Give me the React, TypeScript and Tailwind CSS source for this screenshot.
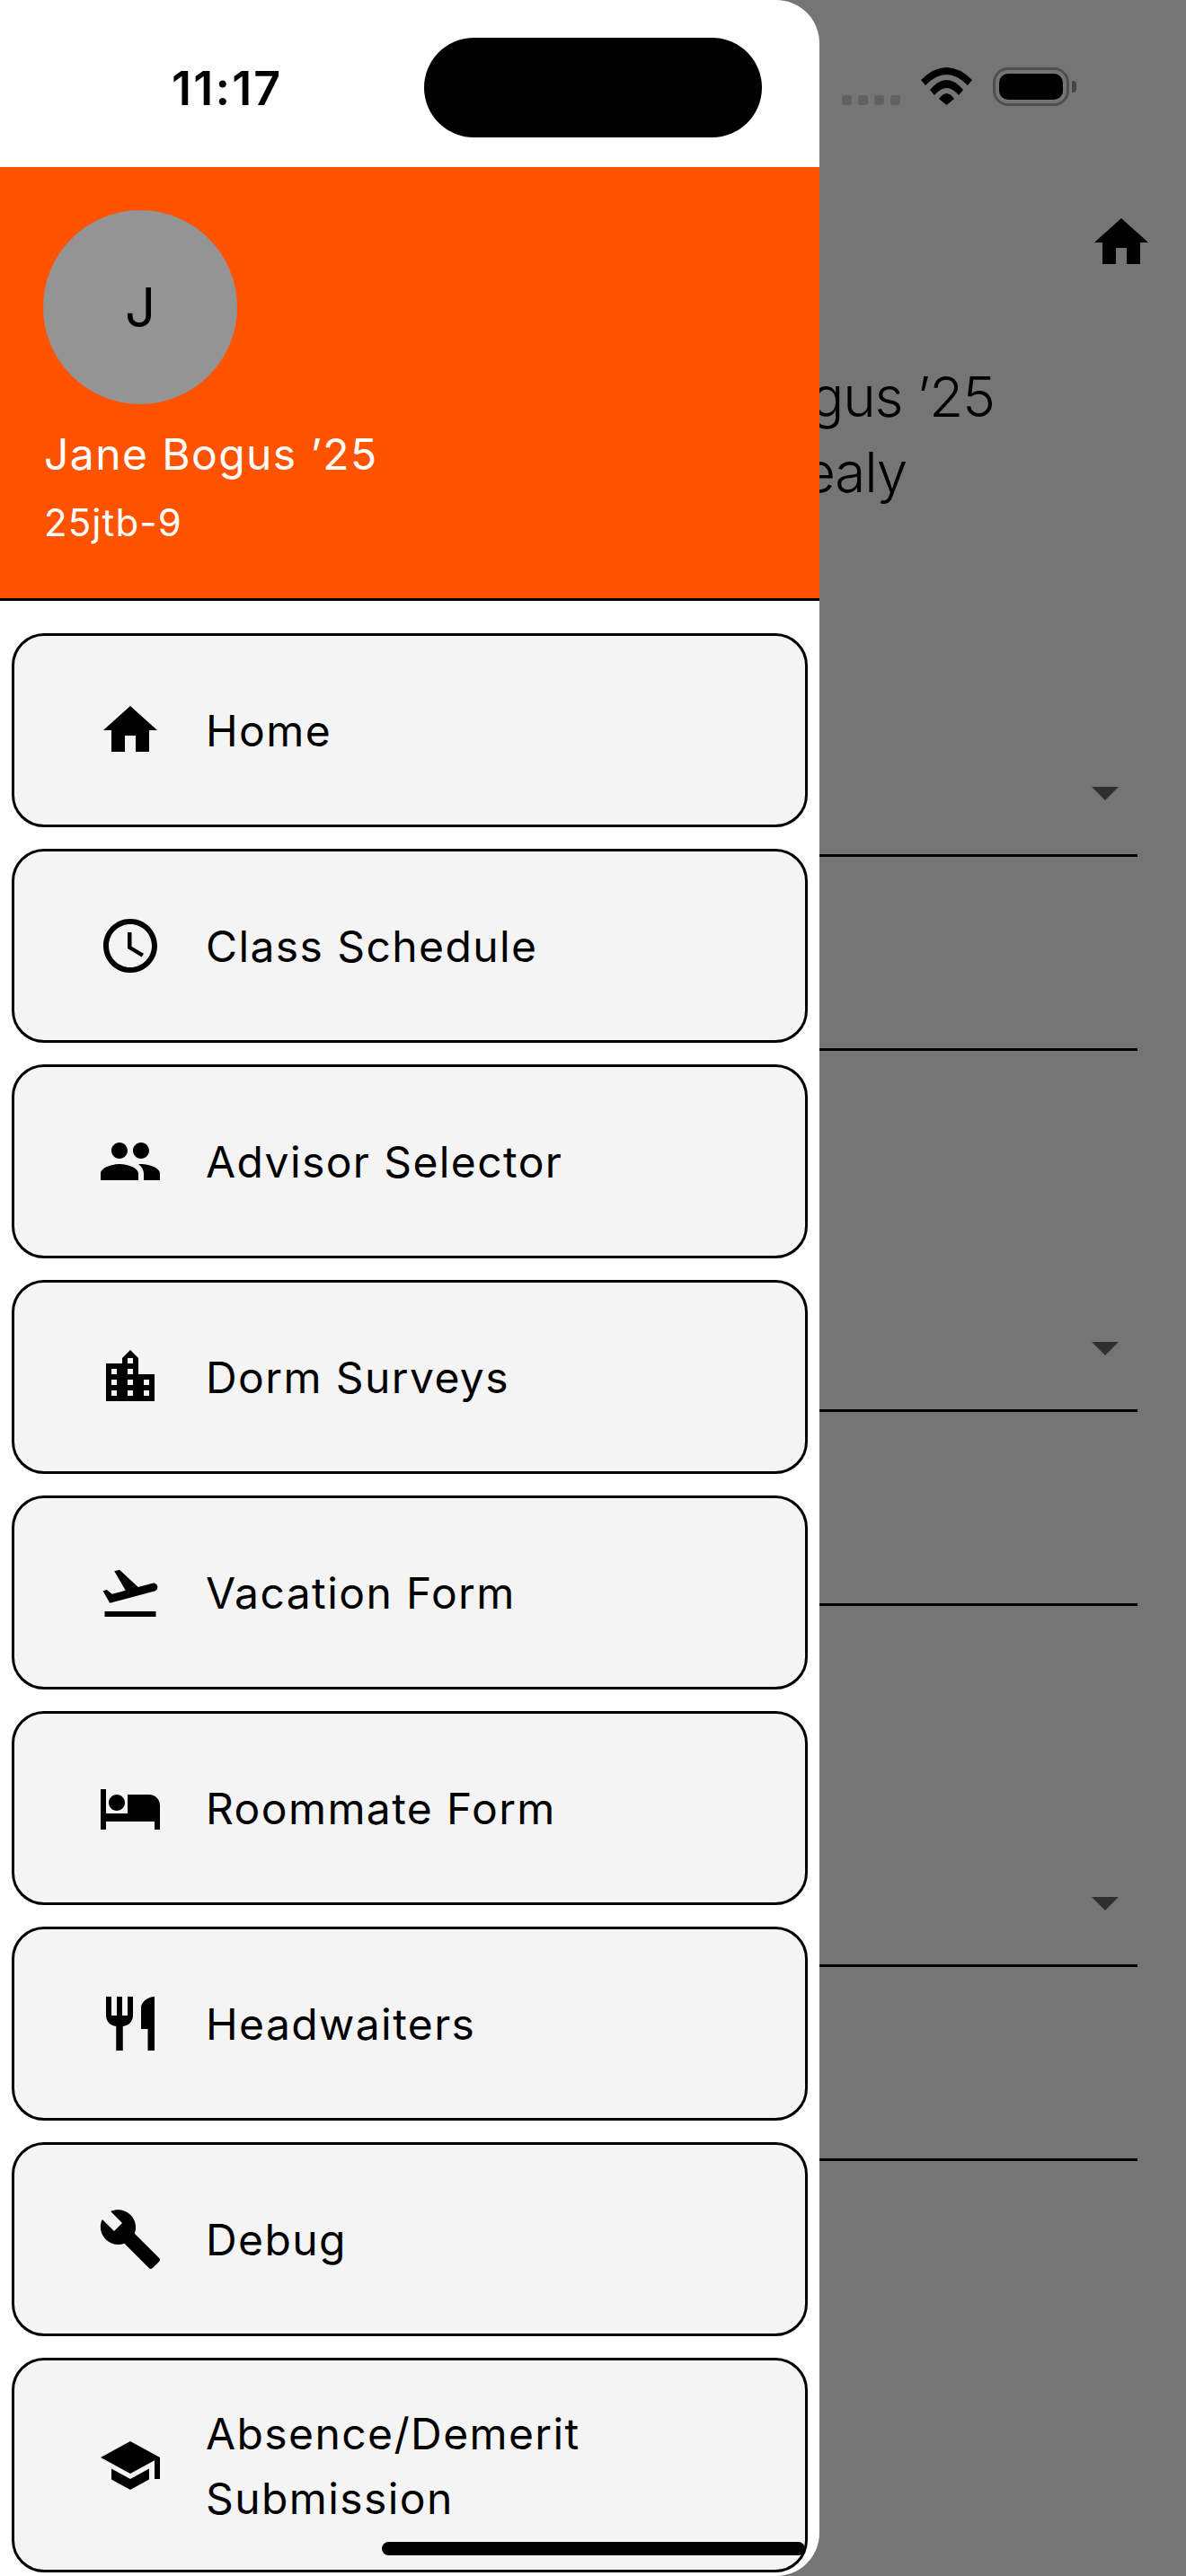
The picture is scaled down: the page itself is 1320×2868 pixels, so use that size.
const NAV_ITEMS: { label: string; icon: string }[] = [
  { label: "Home", icon: "M10 20v-6h4v6h5v-8h3L12 3 2 12h3v8z" },
  { label: "Class Schedule", icon: "M11.99 2C6.47 2 2 6.48 2 12s4.47 10 9.99 10C17.52 22 22 17.52 22 12S17.52 2 11.99 2zM12 20c-4.42 0-8-3.58-8-8s3.58-8 8-8 8 3.58 8 8-3.58 8-8 8zm.5-13H11v6l5.25 3.15.75-1.23-4.5-2.67z" },
  { label: "Advisor Selector", icon: "M16 11c1.66 0 2.99-1.34 2.99-3S17.66 5 16 5c-1.66 0-3 1.34-3 3s1.34 3 3 3zm-8 0c1.66 0 2.99-1.34 2.99-3S9.66 5 8 5C6.34 5 5 6.34 5 8s1.34 3 3 3zm0 2c-2.33 0-7 1.17-7 3.5V19h14v-2.5c0-2.33-4.67-3.5-7-3.5zm8 0c-.29 0-.62.02-.97.05 1.16.84 1.97 1.97 1.97 3.45V19h6v-2.5c0-2.33-4.67-3.5-7-3.5z" },
  { label: "Dorm Surveys", icon: "M15 11V5l-3-3-3 3v2H3v14h18V11h-6zm-8 8H5v-2h2v2zm0-4H5v-2h2v2zm0-4H5V9h2v2zm6 8h-2v-2h2v2zm0-4h-2v-2h2v2zm0-4h-2V9h2v2zm0-4h-2V5h2v2zm6 12h-2v-2h2v2zm0-4h-2v-2h2v2z" },
  { label: "Vacation Form", icon: "M2.5 19h19v2h-19zm19.57-9.36c-.21-.8-1.04-1.28-1.84-1.06L14.92 10l-6.9-6.43-1.93.51 4.14 7.17-4.97 1.33-1.97-1.54-1.45.39 1.82 3.16.77 1.33 1.6-.43 5.31-1.42 4.35-1.16L21 11.49c.81-.23 1.28-1.05 1.07-1.85z" },
  { label: "Roommate Form", icon: "M7 13c1.66 0 3-1.34 3-3S8.66 7 7 7s-3 1.34-3 3 1.34 3 3 3zm12-6h-8v7H3V5H1v15h2v-3h18v3h2v-9c0-2.21-1.79-4-4-4z" },
  { label: "Headwaiters", icon: "M11 9H9V2H7v7H5V2H3v7c0 2.12 1.66 3.84 3.75 3.97V22h2.5v-9.03C11.34 12.84 13 11.12 13 9V2h-2v7zm5-3v8h2.5v8H21V2c-2.76 0-5 2.24-5 4z" },
  { label: "Debug", icon: "M22.7 19l-9.1-9.1c.9-2.3.4-5-1.5-6.9-2-2-5-2.4-7.4-1.3L9 6 6 9 1.6 4.7C.4 7.1.9 10.1 2.9 12.1c1.9 1.9 4.6 2.4 6.9 1.5l9.1 9.1c.4.4 1 .4 1.4 0l2.3-2.3c.5-.4.5-1.1.1-1.4z" },
  { label: "Absence/Demerit Submission", icon: "M5 13.18v4L12 21l7-3.82v-4L12 17l-7-3.82zM12 3 1 9l11 6 9-4.91V17h2V9L12 3z" },
];

const HOME_ICON = NAV_ITEMS[0].icon;

function Icon({ d, className }: { d: string; className: string }) {
  return (
    <svg viewBox="0 0 24 24" className={className} fill="currentColor">
      <path d={d} />
    </svg>
  );
}

function NavCard({ label, icon, tall }: { label: string; icon: string; tall?: boolean }) {
  return (
    <div
      className={`flex items-center rounded-[36px] border-[3px] border-black bg-[#f4f4f4] pl-[93px] pr-[120px] ${
        tall ? "h-[239px]" : "h-[216px]"
      }`}
    >
      <Icon d={icon} className="h-[72px] w-[72px] shrink-0 text-black" />
      <span className="ml-[48px] pt-[2px] text-[48px] font-[380] leading-[72px] tracking-[1.4px] text-black">{label}</span>
    </div>
  );
}

function Field({ arrow }: { arrow?: boolean }) {
  return (
    <div className="relative mr-[54px] h-[216px] border-b-[3px] border-black">
      {arrow ? (
        <div className="absolute right-[21px] top-[138px] h-0 w-0 border-x-[15px] border-t-[15px] border-x-transparent border-t-[#2f2f2f]" />
      ) : null}
    </div>
  );
}

function StatusIcons() {
  return (
    <div className="flex h-[186px] shrink-0 items-start pl-[25px] pt-[75px]">
      <div className="mt-[31px] flex gap-[7px]">
        <span className="h-[11px] w-[11px] rounded-[3px] bg-[#616161]" />
        <span className="h-[11px] w-[11px] rounded-[3px] bg-[#616161]" />
        <span className="h-[11px] w-[11px] rounded-[3px] bg-[#616161]" />
        <span className="h-[11px] w-[11px] rounded-[3px] bg-[#616161]" />
      </div>
      <svg viewBox="0 0 57 42" className="ml-[23px] h-[42px] w-[57px]" fill="black">
        <path d="M0 14Q28.5 -14 57 14L52 20Q28.5 -4 5 20Z" />
        <path d="M10 25Q28.5 3 47 25L42 31Q28.5 15 15 31Z" />
        <path d="M20 35Q28.5 23 37 35L28.5 42Z" />
      </svg>
      <div className="ml-[23px] h-[43px] w-[85px] rounded-[17px] border-[3px] border-[#4f4f4f] p-[4px]">
        <div className="h-full w-full rounded-[10px] bg-black" />
      </div>
      <div className="ml-[3px] mt-[15px] h-[13px] w-[5px] rounded-r-[4px] bg-[#454545]" />
    </div>
  );
}

export default function App() {
  return (
    <div className="flex h-[2868px] w-[1320px] overflow-hidden bg-[#757575] font-['Inter','Liberation_Sans',sans-serif]">
      <aside className="flex h-full w-[912px] shrink-0 flex-col overflow-hidden rounded-r-[48px] bg-white">
        <div className="flex h-[186px] shrink-0 items-center pl-[191px] pt-[8px]">
          <span className="mt-[3px] w-[121px] text-[52px] font-semibold leading-none tracking-[2.2px] text-black">11:17</span>
          <div className="ml-[160px] h-[111px] w-[376px] rounded-full bg-black" />
        </div>
        <div className="h-[483px] shrink-0 border-b-[3px] border-black bg-[#ff5300] pl-[48px] pt-[48px] text-white">
          <div className="flex h-[216px] w-[216px] items-center justify-center rounded-full bg-[#949494] text-[60px] font-[380] text-black">
            J
          </div>
          <p className="ml-[1px] mt-[26px] text-[48px] font-[380] leading-[60px] tracking-[1.4px]">Jane Bogus ’25</p>
          <p className="ml-[1px] mt-[21px] text-[42px] font-[380] leading-[50px] tracking-[1.1px]">25jtb-9</p>
        </div>
        <nav className="relative flex flex-col gap-[24px] px-[13px] pt-[36px]">
          {NAV_ITEMS.map((item, i) => (
            <NavCard key={item.label} label={item.label} icon={item.icon} tall={i === NAV_ITEMS.length - 1} />
          ))}
          <div className="absolute left-[425px] top-[2161px] h-[15px] w-[471px] rounded-full bg-black" />
        </nav>
      </aside>
      <main className="flex min-w-0 flex-1 flex-col overflow-hidden">
        <StatusIcons />
        <div className="flex h-[120px] shrink-0 justify-end pr-[36px] pt-[48px]">
          <Icon d={HOME_ICON} className="h-[72px] w-[72px] text-black" />
        </div>
        <div className="mt-[94px] whitespace-nowrap text-[62px] font-[350] leading-[84px] tracking-[-1.2px] text-black">
          <p className="-ml-[10px]">gus ’25</p>
          <p className="-ml-[18px]">ealy</p>
        </div>
        <div className="mt-[170px] flex flex-col gap-[186px]">
          <div>
            <Field arrow />
            <Field />
          </div>
          <div>
            <Field arrow />
            <Field />
          </div>
          <div>
            <Field arrow />
            <Field />
          </div>
        </div>
      </main>
    </div>
  );
}
